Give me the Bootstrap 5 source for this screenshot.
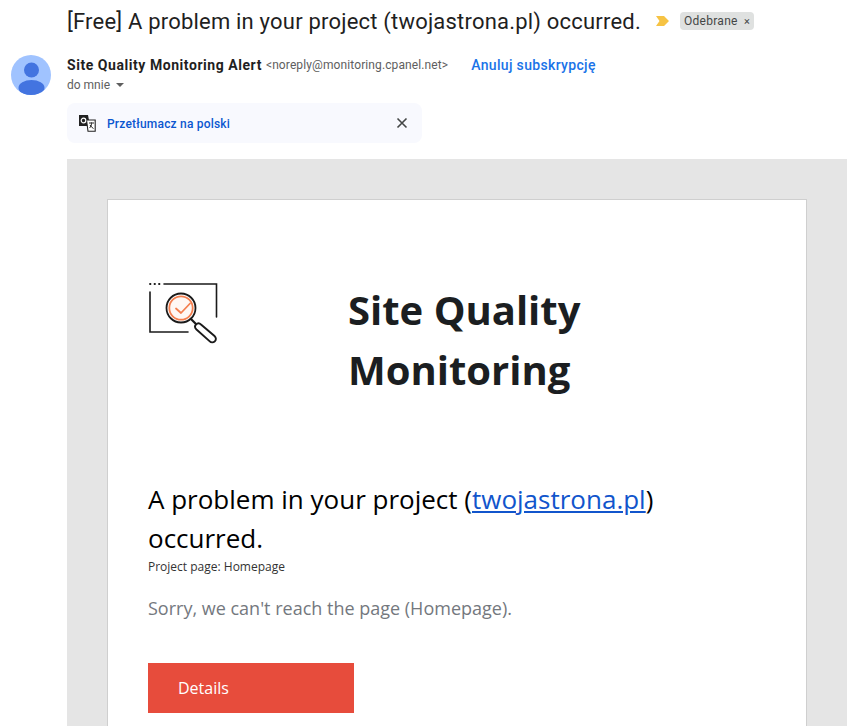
<!DOCTYPE html>
<html lang="pl">
<head>
<meta charset="utf-8">
<title>Site Quality Monitoring</title>
<link href="https://cdn.jsdelivr.net/npm/bootstrap@5.3.0/dist/css/bootstrap.min.css" rel="stylesheet">
<style>
html,body{height:726px;overflow:hidden;background:#fff}
body{font-family:Roboto,"Liberation Sans",sans-serif;color:#202124}
.mail-head{padding:0 0 0 67px;height:43px}
.subject{font-size:22px;line-height:28px;font-weight:400;margin:0;color:#1f1f1f;letter-spacing:.2px;padding-top:8px;white-space:nowrap}
.imp{margin-left:15px;margin-right:11px;margin-top:16px}
.tagchip{margin-top:12px;background:#dfe1e0;border-radius:4px;font-size:12px;line-height:18px;height:18px;padding:0 4px;color:#444746;white-space:nowrap;letter-spacing:.3px}
.tagchip span{font-size:11px;margin-left:3px}
.sender-row{padding-left:11px;height:60px}
.avatar{width:40px;height:40px;margin-top:12px;flex:none}
.sender-col{margin-left:16px;padding-top:13px}
.sname{font-size:14px;font-weight:700;color:#1f1f1f;line-height:18px;letter-spacing:.55px}
.smail{font-size:12px;color:#5e5e5e;letter-spacing:.11px}
.unsub{font-size:14px;font-weight:500;color:#1a73e8;text-decoration:none;line-height:18px;letter-spacing:.33px;margin-left:23px}
.tome{font-size:12px;color:#5e5e5e;line-height:16px;margin-top:3px}
.caret{display:inline-block;border:4px solid transparent;border-top:4px solid #5e5e5e;border-bottom:0;margin-left:6px;vertical-align:2px}
.trans{margin:0 0 0 67px;width:355px;height:40px;background:#f8f9fe;border-radius:8px;padding:0 14px 0 12px}
.trans a{font-size:12px;font-weight:500;color:#0b57d0;text-decoration:none;margin-left:11px;letter-spacing:.2px;padding-top:2px}
.grayarea{margin:16px 14px 0 67px;background:#e5e5e5;padding:40px 40px 0;height:567px}
.sheet{background:#fff;border:1px solid #cfcfcf;border-bottom:0;height:527px;padding:0 40px;font-family:"Open Sans",sans-serif}
.brandrow{padding-top:80px;height:280px}
.brandicon{width:70px;height:64px;flex:none;margin-top:1px}
.brandtitle{font-size:40px;font-weight:700;line-height:60px;color:#1b1e21;margin:0 0 0 130px;width:300px}
.alert-title{font-size:26px;line-height:39px;font-weight:400;color:#000;margin:0}
.alert-title a{color:#1155cc}
.projpage{font-size:12px;line-height:16px;color:#333;margin-top:1px}
.sorry{font-size:18px;line-height:27px;color:#74787e;margin:20px 0 0}
.detailbtn{display:block;width:206px;height:50px;background:#e74c3c;color:#fff;font-size:16px;line-height:50px;padding:0 30px;margin-top:41px;text-decoration:none;border-radius:0;text-align:left;border:0}
</style>
</head>
<body>
<div class="mail-head d-flex align-items-start">
  <h1 class="subject">[Free] A problem in your project (twojastrona.pl) occurred.</h1>
  <svg class="imp" width="13" height="10" viewBox="0 0 13 10"><path d="M0 0h8l5 5-5 5H0l3.500-5z" fill="#f6c344"/></svg>
  <div class="tagchip">Odebrane <span>×</span></div>
</div>
<div class="sender-row d-flex">
  <svg class="avatar" viewBox="0 0 40 40"><defs><clipPath id="av"><circle cx="20" cy="20" r="20"/></clipPath></defs><circle cx="20" cy="20" r="20" fill="#a0c3ff"/><g clip-path="url(#av)" fill="#4374e0"><circle cx="20.500" cy="15" r="7.500"/><ellipse cx="20.500" cy="33" rx="13" ry="8"/></g></svg>
  <div class="sender-col">
    <div class="d-flex align-items-center"><span class="sname">Site Quality Monitoring Alert</span><span class="smail ms-1">&lt;noreply@monitoring.cpanel.net&gt;</span><a class="unsub" href="#">Anuluj subskrypcję</a></div>
    <div class="tome">do mnie<i class="caret"></i></div>
  </div>
</div>
<div class="trans d-flex align-items-center">
  <svg width="17" height="17" viewBox="0 0 17 17"><path d="M0 0h9l2 11H0z" fill="#222"/><path d="M7.500 5h8.700v11.300H9z" fill="#fff" stroke="#222" stroke-width="1.100"/><circle cx="4.500" cy="5.500" r="2.300" fill="none" stroke="#fff" stroke-width="1.200"/><path d="M10 8h5M12.500 7.500v1c0 2-1 3.500-2 4.500M11 10c.8 1.500 2 2.700 3.500 3.500" fill="none" stroke="#222" stroke-width="1"/></svg>
  <a href="#">Przetłumacz na polski</a>
  <svg class="ms-auto" width="12" height="12" viewBox="0 0 12 12"><path d="M1.500 1.500l9 9M10.500 1.500l-9 9" stroke="#444746" stroke-width="1.600"/></svg>
</div>
<div class="grayarea">
  <div class="sheet">
    <div class="brandrow d-flex align-items-start">
      <svg class="brandicon" viewBox="0 0 70 64">
        <g fill="none" stroke="#1a1a1a" stroke-width="1.600" stroke-linecap="round">
          <path d="M16 3H68.500V36"/><path d="M2 11V51H40"/>
          <path d="M2 3h.5M6.500 3h.5M11 3h.5" stroke-width="1.800"/>
          <circle cx="33" cy="27" r="14.500" stroke-width="1.800"/>
          <path d="M43 38l4.500 4.500" stroke-width="2.200"/>
          <path d="M48 43.500c1.500-1.500 3.500-1.500 5 0l13.500 11.500c1.800 1.800 1.800 3.800.3 5.300s-3.600 1.500-5.300-.2L48.500 48.500c-1.500-1.500-2-3.500-.5-5z" stroke-width="1.900"/>
        </g>
        <circle cx="33" cy="27" r="11.700" fill="#fff8f4" stroke="#f47f4f" stroke-width="1.800"/>
        <path d="M28 27.500l5 4.500 9-9.500" fill="none" stroke="#f47f4f" stroke-width="1.800" stroke-linecap="round" stroke-linejoin="round"/>
      </svg>
      <h2 class="brandtitle">Site Quality Monitoring</h2>
    </div>
    <h3 class="alert-title">A problem in your project (<a href="#">twojastrona.pl</a>) occurred.</h3>
    <div class="projpage">Project page: Homepage</div>
    <p class="sorry">Sorry, we can't reach the page (Homepage).</p>
    <a class="detailbtn" href="#">Details</a>
  </div>
</div>
<script src="https://cdn.jsdelivr.net/npm/bootstrap@5.3.0/dist/js/bootstrap.bundle.min.js"></script>
</body>
</html>
